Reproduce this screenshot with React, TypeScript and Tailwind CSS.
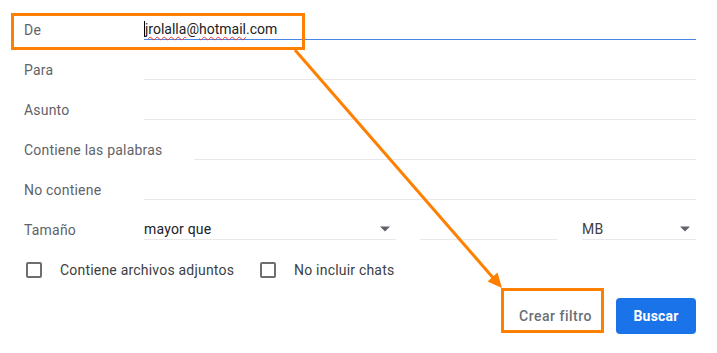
const font = { fontFamily: "Roboto, 'Liberation Sans', sans-serif" };

function Field({ label, children }: { label: string; children?: React.ReactNode }) {
  return (
    <div className="flex h-10 items-end">
      <div className="min-w-[120px] shrink-0 pr-8 text-[14px] leading-5 tracking-[0.2px] text-[#5f6368]">{label}</div>
      <div className="flex h-10 flex-1 items-end border-b border-[#e8e8e8] text-[14px] leading-5 text-[#202124]">
        {children}
      </div>
    </div>
  );
}

function Checkbox({ label }: { label: string }) {
  return (
    <label className="flex items-center">
      <span className="ml-[2px] h-4 w-4 rounded-[2px] border-2 border-[#6e6e6e]" />
      <span className="ml-[18px] text-[14px] leading-5 tracking-[0.2px] text-[#3c4043]">{label}</span>
    </label>
  );
}

function Arrow() {
  return (
    <svg width="10" height="6" viewBox="0 0 10 5" className="mb-[7px] mr-[6px] fill-[#5f6368]">
      <path d="M0 0h10L5 5z" />
    </svg>
  );
}

export default function App() {
  return (
    <div className="relative h-[353px] w-[717px] bg-white" style={font}>
      <div className="flex flex-col pl-6 pr-[21px]">
        <div className="flex h-10 items-end">
          <div className="min-w-[120px] shrink-0 pr-8 text-[14px] leading-5 tracking-[0.2px] text-[#5f6368]">De</div>
          <div className="flex h-10 flex-1 items-end border-b border-[#4a86e8] text-[14px] leading-5 text-[#202124]">
            <span className="mb-[2px] inline-block h-4 w-px bg-black" />
            <span className="underline decoration-[#e53935] decoration-wavy decoration-1 underline-offset-2">jrolalla</span>
            @
            <span className="underline decoration-[#e53935] decoration-wavy decoration-1 underline-offset-2">hotmail</span>
            .com
          </div>
        </div>
        <Field label="Para" />
        <Field label="Asunto" />
        <Field label="Contiene las palabras" />
        <Field label="No contiene" />
        <div className="flex h-10 items-end">
          <div className="min-w-[120px] shrink-0 pr-8 text-[14px] leading-5 tracking-[0.2px] text-[#5f6368]">Tamaño</div>
          <div className="flex h-10 w-[252px] items-end justify-between border-b border-[#e8e8e8] text-[14px] leading-5 tracking-[0.2px] text-[#202124]">
            <span>mayor que</span>
            <Arrow />
          </div>
          <div className="ml-6 h-10 w-[137px] border-b border-[#e8e8e8]" />
          <div className="ml-[25px] flex h-10 flex-1 items-end justify-between border-b border-[#e8e8e8] text-[14px] leading-5 tracking-[0.2px] text-[#3c4043]">
            <span>MB</span>
            <Arrow />
          </div>
        </div>
        <div className="flex h-10 items-end pb-[2px]">
          <div className="flex h-4 items-center gap-6">
            <Checkbox label="Contiene archivos adjuntos" />
            <Checkbox label="No incluir chats" />
          </div>
        </div>
        <div className="mt-[18px] flex justify-end gap-2">
          <button className="h-9 px-4 text-[14px] font-medium tracking-[0.5px] text-[#6b6f73]">Crear filtro</button>
          <button className="h-9 w-20 rounded-[4px] bg-[#1a73e8] text-[14px] font-bold tracking-[0.2px] text-white">Buscar</button>
        </div>
      </div>

      <div className="absolute left-[11px] top-[13px] h-[37px] w-[294px] border-[3px] border-[#ff8000]" />
      <div className="absolute left-[501px] top-[288px] h-[45px] w-[103px] border-[3px] border-[#ff8000]" />
      <svg className="pointer-events-none absolute left-0 top-0" width="717" height="353">
        <line x1="295" y1="50" x2="495" y2="280" stroke="#ff8000" strokeWidth="3" />
        <polygon points="502,288 487.5,281.5 497.5,272.5" fill="#ff8000" />
      </svg>
    </div>
  );
}
